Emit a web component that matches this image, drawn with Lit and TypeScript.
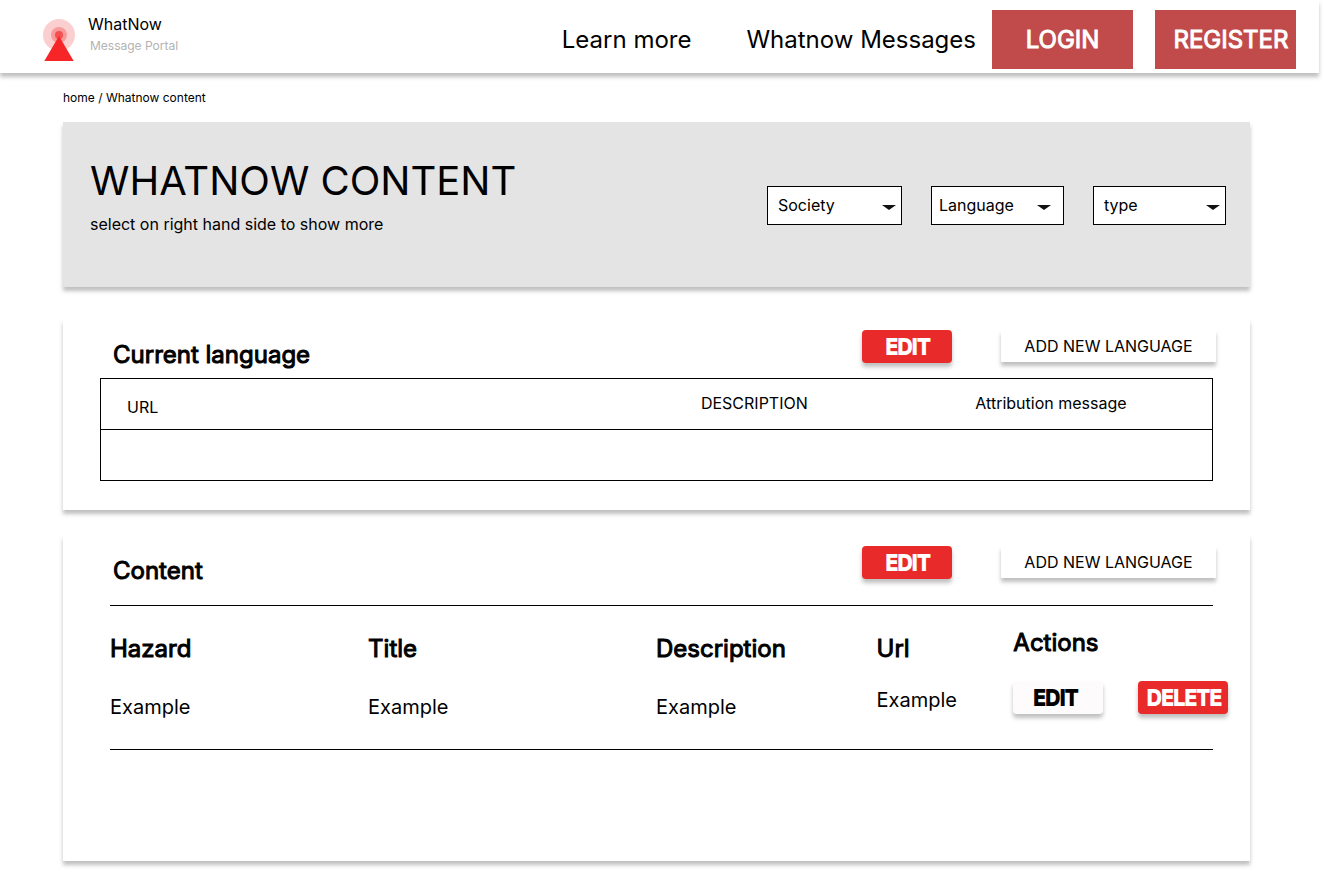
import { LitElement, html, css } from "lit";
import { customElement, property } from "lit/decorators.js";

interface Filter {
  id: string;
  label: string;
  kind: string;
}

const FILTERS: Filter[] = [
  { id: "society", label: "Society", kind: "society" },
  { id: "language", label: "Language", kind: "language" },
  { id: "type", label: "type", kind: "type" },
];

const base = css`
  *,
  *::before,
  *::after {
    box-sizing: border-box;
  }
  button,
  select {
    margin: 0;
    padding: 0;
    border: 0;
    font-family: inherit;
    color: inherit;
    cursor: pointer;
  }
  h1,
  h2,
  p {
    margin: 0;
    font-weight: 400;
  }
  a {
    color: inherit;
    text-decoration: none;
  }
`;

const buttons = css`
  .btn {
    flex: none;
    width: 90px;
    height: 33px;
    padding-left: 2px;
    border-radius: 4px;
    font-size: 20px;
    line-height: 34px;
    text-align: center;
    background: #e92a2b;
    color: #fff;
    -webkit-text-stroke: 2px currentColor;
    box-shadow: 0 4px 4px rgba(0, 0, 0, 0.25);
  }
  .btn.light {
    padding: 0 5px 0 0;
    background: #fdfbfc;
    color: #000;
  }
  .btn-plain {
    flex: none;
    width: 215px;
    height: 32px;
    background: #fff;
    font-size: 16px;
    line-height: 32px;
    box-shadow: 0 4px 4px rgba(0, 0, 0, 0.25);
  }
`;

@customElement("portal-header")
export class PortalHeader extends LitElement {
  static styles = [
    base,
    css`
      :host {
        display: block;
        padding-right: 5px;
      }
      .bar {
        display: flex;
        align-items: flex-start;
        justify-content: space-between;
        padding: 10px 23px 4px 42px;
        background: #fff;
        box-shadow: 0 4px 4px rgba(0, 0, 0, 0.25);
      }
      .brand {
        display: flex;
        gap: 12px;
      }
      .logo {
        display: block;
        width: 34px;
        height: 44px;
        margin-top: 8px;
      }
      .name {
        font-size: 16px;
        line-height: 20px;
        padding-top: 4px;
      }
      .sub {
        padding-left: 2px;
        font-size: 12px;
        line-height: 24px;
        color: #b3b3b3;
      }
      .nav {
        display: flex;
        align-items: center;
        font-size: 24px;
        line-height: 30px;
        white-space: nowrap;
      }
      .links {
        display: flex;
        gap: 55px;
        margin-right: 16px;
      }
      .actions {
        display: flex;
        gap: 22px;
      }
      .cta {
        width: 141px;
        height: 59px;
        background: #c14b4b;
        color: #fff;
        font-size: 24px;
        line-height: 30px;
        -webkit-text-stroke: 1px currentColor;
      }
      .cta.end {
        padding-left: 11px;
      }
    `,
  ];

  render() {
    return html`
      <header class="bar">
        <a class="brand" href="#">
          <svg class="logo" viewBox="0 0 34 44" aria-hidden="true">
            <circle cx="17" cy="17" r="16" fill="#fbcfd0" />
            <circle cx="17" cy="17" r="8" fill="#f79a9c" />
            <circle cx="17" cy="17" r="4" fill="#f64f51" />
            <path d="M17 18 31.700 43H2.300Z" fill="#f62628" />
          </svg>
          <div>
            <div class="name">WhatNow</div>
            <div class="sub">Message Portal</div>
          </div>
        </a>
        <nav class="nav">
          <div class="links">
            <a href="#">Learn more</a>
            <a href="#">Whatnow Messages</a>
          </div>
          <div class="actions">
            <button class="cta" type="button">LOGIN</button>
            <button class="cta end" type="button">REGISTER</button>
          </div>
        </nav>
      </header>
    `;
  }
}

@customElement("portal-banner")
export class PortalBanner extends LitElement {
  static styles = [
    base,
    css`
      :host {
        display: block;
      }
      .banner {
        display: flex;
        justify-content: space-between;
        padding: 34px 24px 53px 27px;
        background: #e4e4e4;
        box-shadow: 0 4px 4px rgba(0, 0, 0, 0.25);
      }
      .title {
        font-size: 40px;
        line-height: 50px;
      }
      .hint {
        margin-top: 8px;
        font-size: 16px;
        line-height: 20px;
      }
      .filters {
        display: flex;
        gap: 29px;
        padding-top: 30px;
      }
      .field {
        position: relative;
        height: 39px;
      }
      .select {
        appearance: none;
        display: block;
        width: 133px;
        height: 39px;
        padding: 0 24px 1px 10px;
        border: 1px solid #000;
        border-radius: 0;
        background: #fff;
        font-size: 16px;
      }
      .society .select {
        width: 135px;
      }
      .language .select {
        padding-left: 7px;
      }
      .caret {
        position: absolute;
        right: 6px;
        top: 19px;
        width: 14px;
        height: 5px;
        pointer-events: none;
      }
      .language .caret {
        right: 13px;
      }
    `,
  ];

  render() {
    return html`
      <section class="banner">
        <div>
          <h1 class="title">WHATNOW CONTENT</h1>
          <p class="hint">select on right hand side to show more</p>
        </div>
        <div class="filters">
          ${FILTERS.map(
            (f) => html`
              <div class="field ${f.kind}">
                <select class="select" id=${f.id} aria-label=${f.label}>
                  <option>${f.label}</option>
                </select>
                <svg class="caret" viewBox="0 0 14 5" aria-hidden="true">
                  <path d="M0 0H14L7 5Z" fill="#111" />
                </svg>
              </div>
            `
          )}
        </div>
      </section>
    `;
  }
}

@customElement("portal-card")
export class PortalCard extends LitElement {
  @property() heading = "";

  static styles = [
    base,
    buttons,
    css`
      :host {
        display: block;
        background: #fff;
        box-shadow: 0 4px 4px rgba(0, 0, 0, 0.25);
      }
      .head {
        display: flex;
        align-items: flex-start;
        height: 51px;
        padding: 11px 34px 0 50px;
      }
      .heading {
        flex: 1;
        align-self: flex-end;
        font-size: 24px;
        line-height: 30px;
        -webkit-text-stroke: 1px currentColor;
      }
      .tools {
        display: flex;
        gap: 49px;
      }
    `,
  ];

  render() {
    return html`
      <div class="head">
        <h2 class="heading">${this.heading}</h2>
        <div class="tools">
          <button class="btn" type="button">EDIT</button>
          <button class="btn-plain" type="button">ADD NEW LANGUAGE</button>
        </div>
      </div>
      <slot></slot>
    `;
  }
}

@customElement("app-root")
export class AppRoot extends LitElement {
  static styles = [
    base,
    buttons,
    css`
      :host {
        display: block;
        font-family: Inter, "Liberation Sans", sans-serif;
        color: #000;
        background: #fff;
      }
      .page {
        padding: 15px 74px 16px 63px;
      }
      .crumbs {
        margin-bottom: 14px;
        font-size: 12px;
        line-height: 20px;
      }
      .card {
        margin-top: 32px;
      }
      .card + .card {
        margin-top: 25px;
      }
      .wrap-url {
        padding: 8px 37px 29px;
      }
      .wrap-content {
        padding: 19px 37px 111px 47px;
      }
      table {
        width: 100%;
        table-layout: fixed;
        border-spacing: 0;
        text-align: left;
      }
      th,
      td {
        padding: 0;
        font-weight: 400;
      }
      .urls {
        border: 1px solid #000;
      }
      .urls th {
        height: 51px;
        padding: 14px 0 12px;
        border-bottom: 1px solid #000;
        font-size: 16px;
        line-height: 20px;
        vertical-align: top;
      }
      .urls .low {
        padding-left: 26px;
        vertical-align: bottom;
      }
      .urls td {
        height: 50px;
      }
      .u1 {
        width: 54%;
      }
      .u2 {
        width: 24.7%;
      }
      .items {
        border-top: 1px solid #000;
        border-bottom: 1px solid #000;
      }
      .items th {
        height: 58px;
        font-size: 24px;
        line-height: 30px;
        vertical-align: bottom;
        -webkit-text-stroke: 1px currentColor;
      }
      .items th.high {
        padding-top: 22px;
        vertical-align: top;
      }
      .items td {
        height: 85px;
        padding: 17px 0 23px;
        font-size: 20px;
        line-height: 38px;
        vertical-align: bottom;
      }
      .items td.high {
        vertical-align: top;
      }
      .row-actions {
        display: flex;
        gap: 35px;
      }
      .c1 {
        width: 23.4%;
      }
      .c2 {
        width: 26.1%;
      }
      .c3 {
        width: 20%;
      }
      .c4 {
        width: 12.4%;
      }
    `,
  ];

  render() {
    return html`
      <portal-header></portal-header>
      <main class="page">
        <nav class="crumbs"><a href="#">home</a> / <a href="#">Whatnow content</a></nav>
        <portal-banner></portal-banner>

        <portal-card class="card" heading="Current language">
          <div class="wrap-url">
            <table class="urls">
              <colgroup>
                <col class="u1" />
                <col class="u2" />
                <col />
              </colgroup>
              <thead>
                <tr>
                  <th class="low">URL</th>
                  <th>DESCRIPTION</th>
                  <th>Attribution message</th>
                </tr>
              </thead>
              <tbody>
                <tr>
                  <td></td>
                  <td></td>
                  <td></td>
                </tr>
              </tbody>
            </table>
          </div>
        </portal-card>

        <portal-card class="card" heading="Content">
          <div class="wrap-content">
            <table class="items">
              <colgroup>
                <col class="c1" />
                <col class="c2" />
                <col class="c3" />
                <col class="c4" />
                <col />
              </colgroup>
              <thead>
                <tr>
                  <th>Hazard</th>
                  <th>Title</th>
                  <th>Description</th>
                  <th>Url</th>
                  <th class="high">Actions</th>
                </tr>
              </thead>
              <tbody>
                <tr>
                  <td>Example</td>
                  <td>Example</td>
                  <td>Example</td>
                  <td class="high">Example</td>
                  <td class="high">
                    <div class="row-actions">
                      <button class="btn light" type="button">EDIT</button>
                      <button class="btn" type="button">DELETE</button>
                    </div>
                  </td>
                </tr>
              </tbody>
            </table>
          </div>
        </portal-card>
      </main>
    `;
  }
}
